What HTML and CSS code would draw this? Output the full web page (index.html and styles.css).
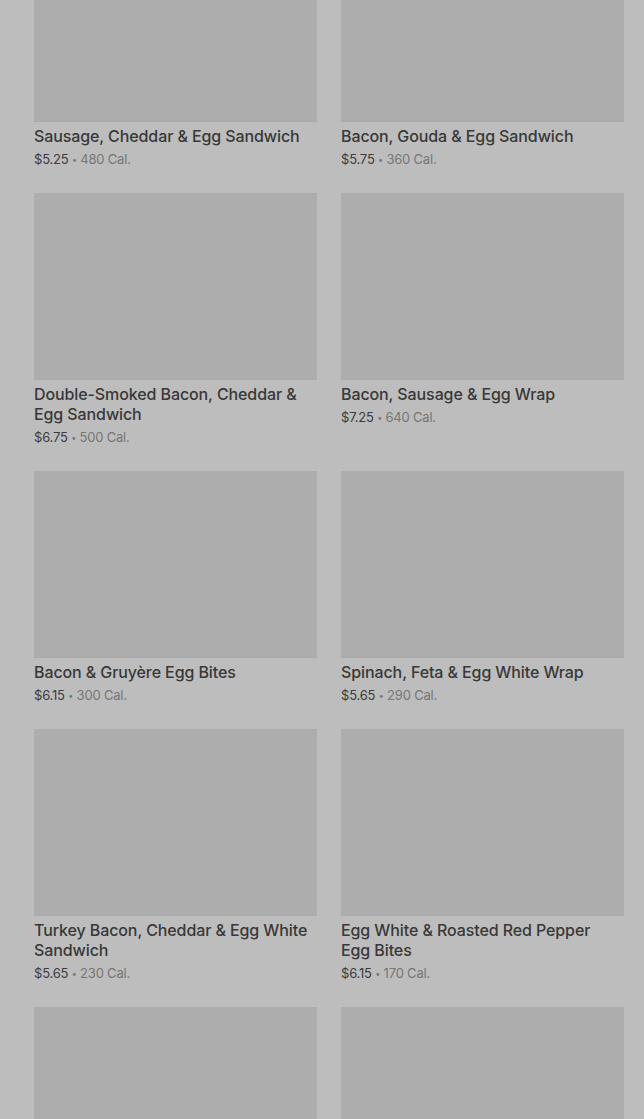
FILE: index.html
```html
<!DOCTYPE html>
<html>
<head>
<meta charset="utf-8">
<link rel="stylesheet" href="styles.css">
</head>
<body>
<div class="grid">
  <div class="card"><div class="img"></div><div class="title">Sausage, Cheddar &amp; Egg Sandwich</div><div class="meta"><span class="price">$5.25</span> <span class="dot">•</span> <span class="cal">480 Cal.</span></div></div>
  <div class="card"><div class="img"></div><div class="title">Bacon, Gouda &amp; Egg Sandwich</div><div class="meta"><span class="price">$5.75</span> <span class="dot">•</span> <span class="cal">360 Cal.</span></div></div>
  <div class="card"><div class="img"></div><div class="title">Double-Smoked Bacon, Cheddar &amp; Egg Sandwich</div><div class="meta"><span class="price">$6.75</span> <span class="dot">•</span> <span class="cal">500 Cal.</span></div></div>
  <div class="card"><div class="img"></div><div class="title">Bacon, Sausage &amp; Egg Wrap</div><div class="meta"><span class="price">$7.25</span> <span class="dot">•</span> <span class="cal">640 Cal.</span></div></div>
  <div class="card"><div class="img"></div><div class="title">Bacon &amp; Gruyère Egg Bites</div><div class="meta"><span class="price">$6.15</span> <span class="dot">•</span> <span class="cal">300 Cal.</span></div></div>
  <div class="card"><div class="img"></div><div class="title">Spinach, Feta &amp; Egg White Wrap</div><div class="meta"><span class="price">$5.65</span> <span class="dot">•</span> <span class="cal">290 Cal.</span></div></div>
  <div class="card"><div class="img"></div><div class="title">Turkey Bacon, Cheddar &amp; Egg White Sandwich</div><div class="meta"><span class="price">$5.65</span> <span class="dot">•</span> <span class="cal">230 Cal.</span></div></div>
  <div class="card"><div class="img"></div><div class="title">Egg White &amp; Roasted Red Pepper Egg Bites</div><div class="meta"><span class="price">$6.15</span> <span class="dot">•</span> <span class="cal">170 Cal.</span></div></div>
  <div class="card"><div class="img"></div></div>
  <div class="card"><div class="img"></div></div>
</div>
</body>
</html>
```
FILE: styles.css
```css
html, body {
  margin: 0;
  padding: 0;
  background: #bdbdbd;
  overflow: hidden;
  height: 1119px;
}
body {
  font-family: Inter, "Noto Sans", sans-serif;
}
.grid {
  display: grid;
  grid-template-columns: 283px 283px;
  column-gap: 24px;
  row-gap: 25px;
  padding: 0 20px 0 34px;
  margin-top: -65px;
}
.card {
  display: flex;
  flex-direction: column;
}
.img {
  height: 187px;
  background: #adadad;
  border-bottom: 1px solid #a9a9a9;
  box-sizing: border-box;
}
.title {
  margin-top: 4px;
  padding-right: 7px;
  font-size: 16px;
  line-height: 20px;
  font-weight: 550;
  color: #383838;
  letter-spacing: -0.1px;
}
.meta {
  margin-top: 4px;
  font-size: 13px;
  line-height: 18px;
  height: 18px;
  color: #767676;
  letter-spacing: -0.2px;
  white-space: nowrap;
}
.price {
  color: #3c3c3c;
}
.dot {
  font-size: 9px;
  line-height: 0;
  vertical-align: 1px;
}
```
